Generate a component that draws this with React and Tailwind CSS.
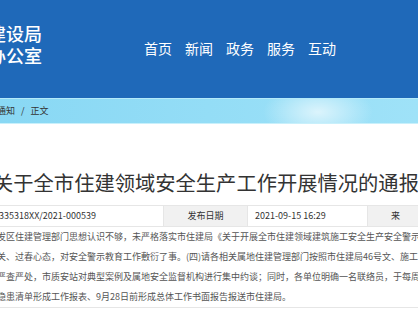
const NAV = ["首页", "新闻", "政务", "服务", "互动"];

const LINES = [
  "发区住建管理部门思想认识不够，未严格落实市住建局《关于开展全市住建领域建筑施工安全生产安全警示教育活动的通知》要求",
  "关、过春心态，对安全警示教育工作敷衍了事。(四)请各相关属地住建管理部门按照市住建局46号文、施工安全",
  "严查严处，市质安站对典型案例及属地安全监督机构进行集中约谈；同时，各单位明确一名联络员，于每周五前",
  "隐患清单形成工作报表、9月28日前形成总体工作书面报告报送市住建局。",
];

export default function App() {
  return (
    <div
      className="w-[418px] h-[330px] overflow-hidden bg-white text-[#333]"
      style={{ fontFamily: '"Noto Sans CJK SC", "Noto Sans", sans-serif' }}
    >
      <header className="h-[98px] bg-[#1f69b9] flex text-white">
        <div className="w-[42px] pt-[22px] flex flex-col items-end shrink-0">
          <div className="text-[18px] leading-[22px] font-medium whitespace-nowrap">建设局</div>
          <div className="text-[18px] leading-[22px] font-medium whitespace-nowrap">办公室</div>
        </div>
        <nav className="ml-[102px] pt-[38px] flex gap-[13px] text-[14px] leading-[20px]">
          {NAV.map((n) => (
            <span key={n} className="whitespace-nowrap">{n}</span>
          ))}
        </nav>
      </header>

      <div className="h-[26px] border-t border-[#b4eafa] border-b border-b-[#c9f0fb] bg-[radial-gradient(ellipse_55px_28px_at_318px_13px,rgba(255,255,255,0.65),transparent),linear-gradient(to_right,#89d8f4,#9fe2f8)] flex items-center">
        <div className="ml-[-3px] text-[9px] leading-[12px] text-[#333] whitespace-nowrap flex">
          <span>通知</span>
          <span className="mx-[6px]">/</span>
          <span>正文</span>
        </div>
      </div>

      <h1 className="mt-[44px] ml-[-7px] h-[28px] text-[20.3px] leading-[28px] font-normal text-[#333] whitespace-nowrap">
        关于全市住建领域安全生产工作开展情况的通报
      </h1>

      <div className="mt-[9px] h-[22px] border-y border-[#e6e6e6] flex text-[9px] text-[#333]">
        <div className="w-[163px] shrink-0 flex items-center whitespace-nowrap">
          <span className="ml-[-1px]">335318XX/2021-000539</span>
        </div>
        <div className="w-[85px] shrink-0 bg-[#f1f1f1] border-x border-[#e6e6e6] flex items-center justify-center whitespace-nowrap">
          发布日期
        </div>
        <div className="w-[119px] shrink-0 flex items-center pl-[7px] whitespace-nowrap">
          2021-09-15 16:29
        </div>
        <div className="flex-1 bg-[#f1f1f1] border-l border-[#e6e6e6] flex items-center pl-[23px] whitespace-nowrap">
          来
        </div>
      </div>

      <div className="border-b border-[#e6e6e6] text-[9px] leading-[20px] text-[#555]">
        {LINES.map((l, i) => (
          <div key={i} className="ml-[-3px] whitespace-nowrap">{l}</div>
        ))}
      </div>
    </div>
  );
}
